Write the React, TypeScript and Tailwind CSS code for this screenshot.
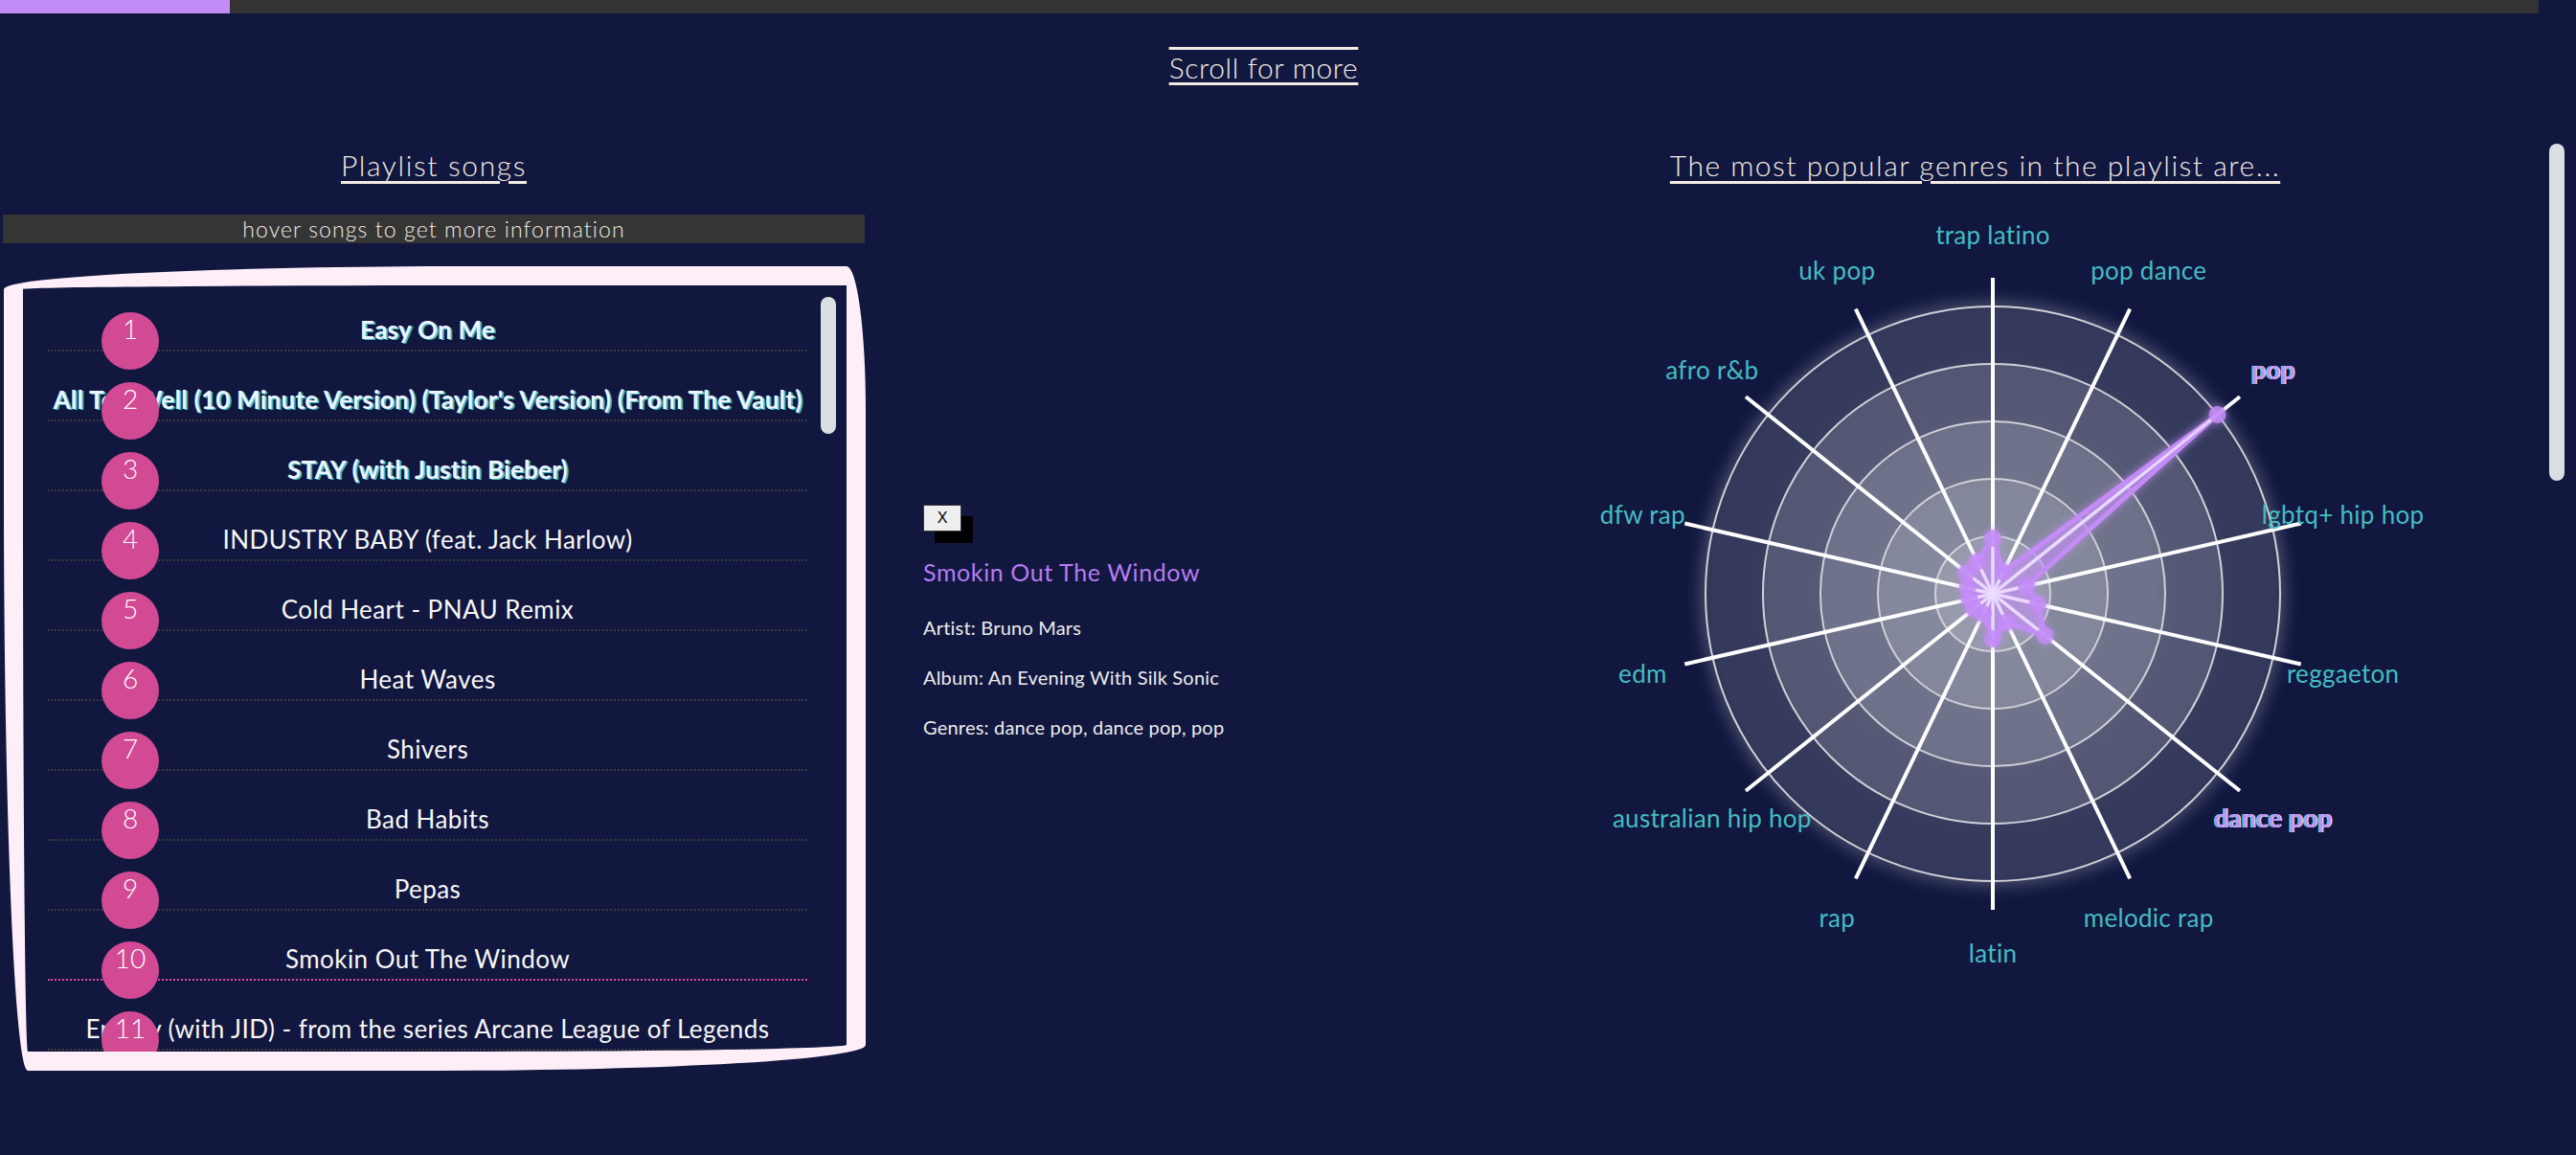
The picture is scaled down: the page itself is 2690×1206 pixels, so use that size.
import React from "react";

const songs = [
  "Easy On Me",
  "All Too Well (10 Minute Version) (Taylor's Version) (From The Vault)",
  "STAY (with Justin Bieber)",
  "INDUSTRY BABY (feat. Jack Harlow)",
  "Cold Heart - PNAU Remix",
  "Heat Waves",
  "Shivers",
  "Bad Habits",
  "Pepas",
  "Smokin Out The Window",
  "Enemy (with JID) - from the series Arcane League of Legends",
  "Ghost",
];

const genres = [
  { name: "trap latino", value: 58 },
  { name: "pop dance", value: 25 },
  { name: "pop", value: 300, hot: true },
  { name: "lgbtq+ hip hop", value: 36 },
  { name: "reggaeton", value: 48 },
  { name: "dance pop", value: 70, hot: true },
  { name: "melodic rap", value: 33 },
  { name: "latin", value: 47 },
  { name: "rap", value: 23 },
  { name: "australian hip hop", value: 25 },
  { name: "edm", value: 25 },
  { name: "dfw rap", value: 27 },
  { name: "afro r&b", value: 35 },
  { name: "uk pop", value: 37 },
];

const font = { fontFamily: "Lato, 'Noto Sans', sans-serif" };

function SongRow({ title, index }: { title: string; index: number }) {
  const top = index < 3;
  const selected = index === 9;
  return (
    <div
      className={`relative h-[73px] pt-[35px] border-b-2 border-dotted ${
        selected ? "border-[#e0489b]" : "border-[#3a3a3a]"
      }`}
    >
      <div
        className={`whitespace-nowrap text-center leading-[30px] ${
          top
            ? "text-[26px] font-bold tracking-[0.25px] text-[#eef3ff] [text-shadow:2px_1px_0_#3fb6c0]"
            : "text-[26px] font-normal tracking-[0.45px] text-[#f6f6f6]"
        }`}
      >
        {title}
      </div>
      <div className="absolute left-[56px] top-[32px] z-10 flex h-[60px] w-[60px] justify-center rounded-full bg-[#d14a93] text-[28px] font-light leading-[34px] text-white">
        {index + 1}
      </div>
    </div>
  );
}

function Radar() {
  const cx = 607;
  const cy = 430;
  const n = genres.length;
  const pt = (i: number, r: number) => {
    const a = (i * 2 * Math.PI) / n;
    return [cx + Math.sin(a) * r, cy - Math.cos(a) * r];
  };
  const poly = genres.map((g, i) => pt(i, g.value).join(",")).join(" ");
  return (
    <svg width={1177} height={880} className="block" style={font}>
      <defs>
        <filter id="glow" x="-30%" y="-30%" width="160%" height="160%">
          <feDropShadow dx="0" dy="0" stdDeviation="8" floodColor="#ffffff" floodOpacity="0.3" />
        </filter>
        <filter id="blur" x="-30%" y="-30%" width="160%" height="160%">
          <feGaussianBlur stdDeviation="9" />
        </filter>
        <filter id="pglow" x="-30%" y="-30%" width="160%" height="160%">
          <feDropShadow dx="0" dy="0" stdDeviation="4" floodColor="#c38cf6" floodOpacity="0.8" />
        </filter>
      </defs>
      <circle cx={cx} cy={cy} r={304} fill="#ffffff" opacity={0.25} filter="url(#blur)" />
      <circle cx={cx} cy={cy} r={300} fill="#11173f" />
      {[300, 240, 180, 120, 60].map((r) => (
        <circle key={r} cx={cx} cy={cy} r={r} fill="#ffffff" fillOpacity={0.12} filter="url(#glow)" />
      ))}
      {[300, 240, 180, 120, 60].map((r) => (
        <circle key={"s" + r} cx={cx} cy={cy} r={r} fill="none" stroke="#d0d0d8" strokeWidth={2} />
      ))}
      {genres.map((g, i) => {
        const [x, y] = pt(i, 330);
        return <line key={g.name} x1={cx} y1={cy} x2={x} y2={y} stroke="#ffffff" strokeWidth={4} />;
      })}
      <g filter="url(#pglow)">
        <polygon points={poly} fill="#c38cf6" fillOpacity={0.35} stroke="#c38cf6" strokeWidth={5} strokeLinejoin="round" />
        {genres.map((g, i) => {
          const [x, y] = pt(i, g.value);
          return <line key={"l" + g.name} x1={cx} y1={cy} x2={x} y2={y} stroke="#ecdfff" strokeWidth={3} opacity={0.85} />;
        })}
        {genres.map((g, i) => {
          const [x, y] = pt(i, g.value);
          return <circle key={"d" + g.name} cx={x} cy={y} r={9} fill="#c38cf6" opacity={0.85} />;
        })}
      </g>
      {genres.map((g, i) => {
        const [x, y] = pt(i, 375);
        if (g.hot) {
          return (
            <g key={"t" + g.name} fontSize={26} fontWeight={600} letterSpacing={0.5} textAnchor="middle" dominantBaseline="central">
              <text x={x - 1.5} y={y} fill="#5fd3d6">
                {g.name}
              </text>
              <text x={x + 1} y={y} fill="#efe2ff">
                {g.name}
              </text>
              <text x={x} y={y} fill="#c58ff6">
                {g.name}
              </text>
            </g>
          );
        }
        return (
          <text
            key={"t" + g.name}
            x={x}
            y={y}
            fontSize={26}
            fontWeight={400}
            letterSpacing={0.3}
            fill="#45bcc1"
            textAnchor="middle"
            dominantBaseline="central"
          >
            {g.name}
          </text>
        );
      })}
    </svg>
  );
}

export default function App() {
  return (
    <div className="flex h-[1206px] w-[2690px] overflow-hidden bg-[#11173f] text-[#f4ece2]" style={font}>
      <div className="flex w-[2651px] flex-col">
        {/* scroll progress */}
        <div className="h-[14px] w-full bg-[#333333]">
          <div className="h-full w-[240px] bg-[#c38cf6]" />
        </div>

        <div className="mt-[38px] pr-[12px] text-center text-[30px] font-light leading-[36px] tracking-[0.6px] [text-decoration-line:underline_overline] decoration-[3px] underline-offset-[4px]">
          Scroll for more
        </div>

        <div className="grid grid-cols-[906px_568px_1177px]">
          {/* playlist */}
          <div className="flex flex-col">
            <h2 className="mt-[66px] text-center text-[30px] font-light leading-[36px] tracking-[1.6px] underline decoration-[3px] underline-offset-[5px]">
              Playlist songs
            </h2>
            <div className="mx-[3px] mt-[34px] h-[30px] bg-[#353535] text-center text-[23px] font-light leading-[30px] tracking-[1.1px] text-[#f1ebe2]">
              hover songs to get more information
            </div>
            <div className="ml-[4px] mt-[24px] h-[840px] w-[900px] overflow-hidden border-[20px] border-[#fdeef8] [border-radius:490px_20px_450px_25px/24px_150px_27px_600px]">
              <div className="flex h-full">
                <div className="ml-[26px] h-full w-[793px] overflow-hidden">
                  <div className="-mt-[4px]">
                    {songs.map((s, i) => (
                      <SongRow key={s} title={s} index={i} />
                    ))}
                  </div>
                </div>
                <div className="ml-[14px] mt-[12px] h-[143px] w-[16px] rounded-full bg-[#d9dfe3]" />
              </div>
            </div>
          </div>

          {/* selected song */}
          <div className="pl-[58px] pt-[439px]">
            <button
              className="h-[28px] w-[40px] border border-[#3a3a3a] bg-[#efefef] text-[16px] leading-none text-black shadow-[12px_12px_0_#000]"
              style={{ fontFamily: "'Liberation Sans', Arial, sans-serif" }}
            >
              X
            </button>
            <div className="mt-[26px] text-[25px] leading-[32px] tracking-[0.6px] text-[#b67cee]">Smokin Out The Window</div>
            <div className="mt-[31px] flex flex-col gap-[30px] text-[20px] leading-[22px] tracking-[0.2px] text-[#ececec]">
              <div>Artist: Bruno Mars</div>
              <div>Album: An Evening With Silk Sonic</div>
              <div>Genres: dance pop, dance pop, pop</div>
            </div>
          </div>

          {/* genres */}
          <div className="flex flex-col">
            <h2 className="mt-[66px] text-center text-[30px] font-light leading-[36px] tracking-[1.5px] underline decoration-[3px] underline-offset-[5px]">
              The most popular genres in the playlist are...
            </h2>
            <Radar />
          </div>
        </div>
      </div>

      {/* page scrollbar */}
      <div className="w-[39px]">
        <div className="ml-[11px] mt-[150px] h-[352px] w-[16px] rounded-full bg-[#d9dfe3]" />
      </div>
    </div>
  );
}
